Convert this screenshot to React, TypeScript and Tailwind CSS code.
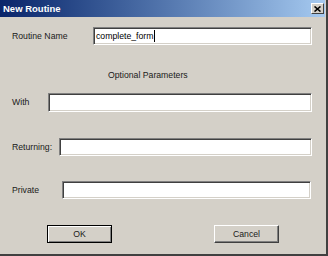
import React from "react";

const sunken =
  "bg-white border border-t-[#808080] border-l-[#808080] border-b-white border-r-white shadow-[inset_1px_1px_0_#404040,inset_-1px_-1px_0_#d4d0c8]";

function Field({ label, labelW, inputW, mt, h = 19, children }: { label: string; labelW: number; inputW: number; mt: number; h?: number; children?: React.ReactNode }) {
  return (
    <div className="flex items-center pl-[12px]" style={{ marginTop: mt }}>
      <div className="shrink-0 text-[8.7px] leading-[11px] text-[#1a1a1a]" style={{ width: labelW }}>
        {label}
      </div>
      <div className={`${sunken} flex items-center pl-[2px]`} style={{ width: inputW, height: h }}>
        {children}
      </div>
    </div>
  );
}

export default function App() {
  return (
    <div className="w-[328px] h-[256px] bg-[#d4d0c8] font-['Liberation_Sans',Arial,sans-serif] flex flex-col border-r-2 border-b-2 border-r-[#404040] border-b-[#404040] overflow-hidden">
      <div className="h-[17px] w-[325px] bg-linear-to-r from-[#0a246a] to-[#a6caf0] flex items-center justify-between pl-[3px] pr-[1px]">
        <span className="text-white font-bold text-[9.5px] leading-[11px]">New Routine</span>
        <div className="w-[13px] h-[11px] bg-[#d4d0c8] border border-t-white border-l-white border-b-[#404040] border-r-[#404040] flex items-center justify-center">
          <svg width="7" height="6" viewBox="0 0 7 6">
            <path d="M0.5 0.5 L6.5 5.5 M6.5 0.5 L0.5 5.5" stroke="#000" strokeWidth="1.6" />
          </svg>
        </div>
      </div>

      <Field label="Routine Name" labelW={81} inputW={219} mt={10} h={18}>
        <span className="text-[8.7px] leading-[11px] text-black">complete_form</span>
        <span className="w-px h-[12px] bg-black ml-[1px]" />
      </Field>

      <div className="mt-[25px] pl-[108px] text-[8.7px] leading-[11px] text-[#1a1a1a]">Optional Parameters</div>

      <Field label="With" labelW={36} inputW={264} mt={12} />
      <Field label="Returning:" labelW={47} inputW={253} mt={26} h={18} />
      <Field label="Private" labelW={50} inputW={249} mt={25} h={18} />

      <div className="flex mt-[26px] pl-[47px]">
        <button className="w-[65px] h-[18px] bg-[#d4d0c8] border border-[#000] shadow-[inset_1px_1px_0_#ffffff,inset_-1px_-1px_0_#808080] text-[8.7px] leading-[11px] text-[#1a1a1a] flex items-center justify-center">
          OK
        </button>
        <button className="ml-[102px] w-[65px] h-[18px] bg-[#d4d0c8] border border-t-white border-l-white border-b-[#404040] border-r-[#404040] shadow-[inset_-1px_-1px_0_#808080] text-[8.7px] leading-[11px] text-[#1a1a1a] flex items-center justify-center">
          Cancel
        </button>
      </div>
    </div>
  );
}
